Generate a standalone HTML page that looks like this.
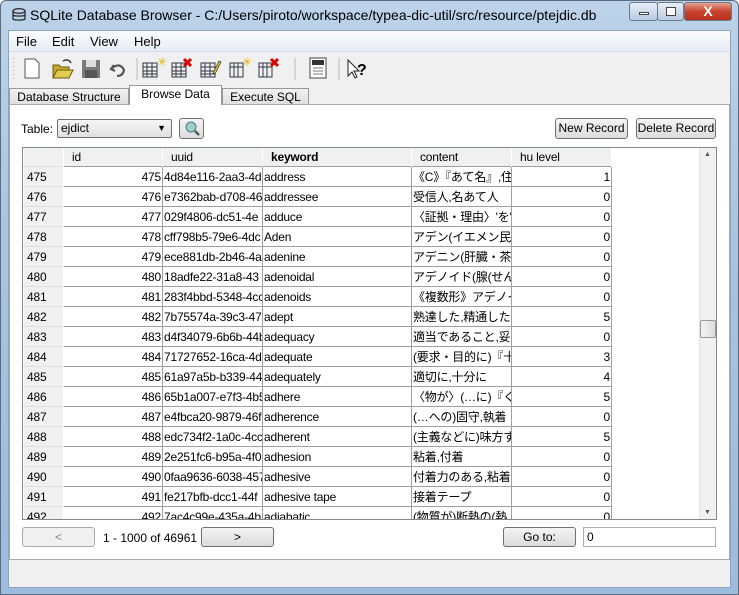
<!DOCTYPE html>
<html><head><meta charset="utf-8"><style>
*{margin:0;padding:0;box-sizing:border-box}
body{width:739px;height:595px;overflow:hidden;background:#fff;font-family:"Liberation Sans","Noto Sans CJK JP",sans-serif;font-size:12px;color:#000;position:relative}
.abs{position:absolute}
#frame{left:0;top:0;width:739px;height:595px;background:linear-gradient(#bcd3ea,#a9c4e2 40%,#9dbbdd);border-radius:6px 6px 0 0;border:1px solid #5b6b80}
#title{left:30px;top:7px;font-size:14px;color:#000}
#client{left:8px;top:30px;width:723px;height:558px;background:#f0f0f0;border:1px solid #8ea3bd}
#menu{left:9px;top:31px;width:721px;height:21px;background:linear-gradient(#fbfcfe,#e6ecf5);border-bottom:1px solid #d8dde6}
#menu span{position:absolute;top:3px;font-size:13px}
.btnw{border:1px solid #6d7a8c;border-radius:3px;height:19px;top:2px}
#tabs div{position:absolute;height:18px;border:1px solid #999;border-bottom:none;background:linear-gradient(#f2f2f2,#dcdcdc);font-size:12px;text-align:center;line-height:17px}
#panel{left:9px;top:104px;width:721px;height:456px;background:#fff;border:1px solid #aaa}
.btn{border:1px solid #707070;border-radius:3px;background:linear-gradient(#f4f4f4,#dcdcdc);text-align:center;font-size:12px;line-height:18px}
#grid{left:22px;top:147px;width:695px;height:373px;border:1px solid #828790;overflow:hidden;background:#fff}
table{border-collapse:collapse;table-layout:fixed;position:absolute;left:0;top:0;width:588px}
td{height:20px;border:1px solid #a0a0a0;white-space:nowrap;overflow:hidden;padding:0 1px;font-size:12px;line-height:18px;letter-spacing:-0.2px}
td.n{background:#f0f0f0;border-color:#e0e0e0 #fff;padding-left:3px}
td.r{text-align:right}
tr.h td{height:18px;background:#f0f0f0;border:none;border-right:1px solid #fff;padding-left:8px}
#vs{left:699px;top:148px;width:17px;height:371px;background:#f0f0f0;border-left:1px solid #e4e4e4}
</style></head><body>
<div id="frame" class="abs"></div>
<svg class="abs" style="left:11px;top:8px" width="16" height="14"><ellipse cx="8" cy="3" rx="6" ry="2.3" fill="none" stroke="#333" stroke-width="1.4"/><path d="M2 3v8c0 1.4 12 1.4 12 0V3M2 7c0 1.4 12 1.4 12 0" fill="none" stroke="#333" stroke-width="1.4"/></svg>
<div id="title" class="abs">SQLite Database Browser - C:/Users/piroto/workspace/typea-dic-util/src/resource/ptejdic.db</div>
<div class="abs btnw" style="left:629px;width:29px;background:linear-gradient(#e8eef6,#b9cbe2)"><div style="position:absolute;left:9px;top:9px;width:10px;height:3px;border:1px solid #444;background:#fff"></div></div>
<div class="abs btnw" style="left:657px;width:27px;background:linear-gradient(#e8eef6,#b9cbe2)"><div style="position:absolute;left:8px;top:4px;width:10px;height:9px;border:1px solid #444;background:#fff"></div></div>
<div class="abs btnw" style="left:684px;width:48px;background:linear-gradient(#e8a090,#c7422c 50%,#b8301c);color:#fff;font-weight:bold;text-align:center;font-size:14px;line-height:17px">X</div>
<div id="client" class="abs"></div>
<div id="menu" class="abs"><span style="left:7px">File</span><span style="left:43px">Edit</span><span style="left:81px">View</span><span style="left:125px">Help</span></div>
<div class="abs" style="left:9px;top:53px;width:721px;height:33px;background:#f0f0f0"></div>
<svg class="abs" style="left:10px;top:55px" width="370" height="28">
<g fill="#aaa"><rect x="3" y="3" width="1" height="1"/><rect x="3" y="7" width="1" height="1"/><rect x="3" y="11" width="1" height="1"/><rect x="3" y="15" width="1" height="1"/><rect x="3" y="19" width="1" height="1"/><rect x="3" y="23" width="1" height="1"/></g>
<path d="M15 4h10l4 4v15H15z" fill="#fff" stroke="#555"/>
<path d="M43 10h6l2 2h8v11H43z" fill="#c8a830" stroke="#6b5a10"/><path d="M43 23l4-8h16l-4 8z" fill="#e0cc50" stroke="#6b5a10"/><path d="M53 6q5-3 8 2" fill="none" stroke="#333" stroke-width="1.5"/>
<rect x="72" y="5" width="18" height="18" rx="1" fill="#7a7a7a"/><rect x="76" y="5" width="10" height="7" fill="#ddd"/><rect x="75" y="15" width="12" height="8" fill="#555"/>
<path d="M104 10l-3 4 4 2M102 13q8-6 12 2q-1 6-7 6" fill="none" stroke="#555" stroke-width="2.2"/>
<line x1="127" y1="3" x2="127" y2="25" stroke="#bbb"/>
<g fill="none" stroke="#334"><rect x="133" y="8" width="14" height="14"/><path d="M133 12h14M133 16h14M133 19h14M137 8v14M142 8v14"/></g><text x="147" y="11" fill="#e8b000" font-size="12">✳</text>
<g fill="none" stroke="#334"><rect x="162" y="8" width="14" height="14"/><path d="M162 12h14M162 16h14M162 19h14M166 8v14M171 8v14"/></g><path d="M174 4l7 7M181 4l-7 7" stroke="#d00" stroke-width="3"/>
<g fill="none" stroke="#334"><rect x="191" y="8" width="14" height="14"/><path d="M191 12h14M191 16h14M191 19h14M195 8v14M200 8v14"/></g><path d="M203 18l6-12 2 1-6 12z" fill="#e8c020" stroke="#333" stroke-width=".7"/>
<g fill="none" stroke="#334"><rect x="220" y="8" width="13" height="14"/><path d="M220 12h13M224 8v14M228 8v14"/></g><text x="232" y="11" fill="#e8b000" font-size="12">✳</text>
<g fill="none" stroke="#334"><rect x="249" y="8" width="13" height="14"/><path d="M249 12h13M253 8v14M257 8v14"/></g><path d="M261 4l7 7M268 4l-7 7" stroke="#d00" stroke-width="3"/>
<line x1="285" y1="3" x2="285" y2="25" stroke="#bbb"/>
<rect x="300" y="3" width="16" height="20" fill="#fff" stroke="#444"/><rect x="302" y="5" width="12" height="5" fill="#333"/><path d="M303 13h10M303 16h10M303 19h10" stroke="#777"/>
<line x1="329" y1="3" x2="329" y2="25" stroke="#bbb"/>
<path d="M338 5v16l4-4 3 6 2-1-3-6h5z" fill="#fff" stroke="#222"/><text x="347" y="20" font-size="16" font-weight="bold" font-family="Liberation Sans">?</text>
</svg>
<div id="tabs">
<div style="left:9px;top:88px;width:120px">Database Structure</div>
<div style="left:129px;top:85px;width:93px;height:20px;background:#fff;z-index:2">Browse Data</div>
<div style="left:222px;top:88px;width:87px">Execute SQL</div>
</div>
<div id="panel" class="abs"></div>
<div class="abs" style="left:21px;top:122px">Table:</div>
<div class="abs" style="left:57px;top:119px;width:115px;height:19px;border:1px solid #707070;border-radius:2px;background:linear-gradient(#f6f6f6,#e0e0e0);padding-left:3px;line-height:17px">ejdict<span style="position:absolute;right:5px;top:0;font-size:9px">▼</span></div>
<div class="abs btn" style="left:179px;top:118px;width:25px;height:21px"><svg width="22" height="19"><circle cx="10" cy="8" r="5" fill="#9cd0c8" stroke="#4a7a8a"/><path d="M14 12l4 4" stroke="#555" stroke-width="2.5"/></svg></div>
<div class="abs btn" style="left:555px;top:118px;width:73px;height:21px">New Record</div>
<div class="abs btn" style="left:636px;top:118px;width:80px;height:21px">Delete Record</div>
<div id="grid" class="abs">
<table>
<colgroup><col style="width:40px"><col style="width:99px"><col style="width:100px"><col style="width:149px"><col style="width:100px"><col style="width:100px"></colgroup>
<tr class="h"><td></td><td>id</td><td>uuid</td><td><b>keyword</b></td><td>content</td><td>hu level</td></tr>
<tr><td class="n">475</td><td class="r">475</td><td>4d84e116-2aa3-4d</td><td>address</td><td>《C》『あて名』,住所</td><td class="r">1</td></tr>
<tr><td class="n">476</td><td class="r">476</td><td>e7362bab-d708-46</td><td>addressee</td><td>受信人,名あて人</td><td class="r">0</td></tr>
<tr><td class="n">477</td><td class="r">477</td><td>029f4806-dc51-4e</td><td>adduce</td><td>〈証拠・理由〉'を'あげる</td><td class="r">0</td></tr>
<tr><td class="n">478</td><td class="r">478</td><td>cff798b5-79e6-4dc</td><td>Aden</td><td>アデン(イエメン民主</td><td class="r">0</td></tr>
<tr><td class="n">479</td><td class="r">479</td><td>ece881db-2b46-4a</td><td>adenine</td><td>アデニン(肝臓・茶の</td><td class="r">0</td></tr>
<tr><td class="n">480</td><td class="r">480</td><td>18adfe22-31a8-43</td><td>adenoidal</td><td>アデノイド(腺(せん)</td><td class="r">0</td></tr>
<tr><td class="n">481</td><td class="r">481</td><td>283f4bbd-5348-4cc</td><td>adenoids</td><td>《複数形》アデノイド</td><td class="r">0</td></tr>
<tr><td class="n">482</td><td class="r">482</td><td>7b75574a-39c3-47</td><td>adept</td><td>熟達した,精通した(</td><td class="r">5</td></tr>
<tr><td class="n">483</td><td class="r">483</td><td>d4f34079-6b6b-44b</td><td>adequacy</td><td>適当であること,妥当</td><td class="r">0</td></tr>
<tr><td class="n">484</td><td class="r">484</td><td>71727652-16ca-4d</td><td>adequate</td><td>(要求・目的に)『十分</td><td class="r">3</td></tr>
<tr><td class="n">485</td><td class="r">485</td><td>61a97a5b-b339-44</td><td>adequately</td><td>適切に,十分に</td><td class="r">4</td></tr>
<tr><td class="n">486</td><td class="r">486</td><td>65b1a007-e7f3-4b5</td><td>adhere</td><td>〈物が〉(…に)『くっつ</td><td class="r">5</td></tr>
<tr><td class="n">487</td><td class="r">487</td><td>e4fbca20-9879-46f</td><td>adherence</td><td>(…への)固守,執着</td><td class="r">0</td></tr>
<tr><td class="n">488</td><td class="r">488</td><td>edc734f2-1a0c-4cc</td><td>adherent</td><td>(主義などに)味方す</td><td class="r">5</td></tr>
<tr><td class="n">489</td><td class="r">489</td><td>2e251fc6-b95a-4f0</td><td>adhesion</td><td>粘着,付着</td><td class="r">0</td></tr>
<tr><td class="n">490</td><td class="r">490</td><td>0faa9636-6038-457</td><td>adhesive</td><td>付着力のある,粘着</td><td class="r">0</td></tr>
<tr><td class="n">491</td><td class="r">491</td><td>fe217bfb-dcc1-44f</td><td>adhesive tape</td><td>接着テープ</td><td class="r">0</td></tr>
<tr><td class="n">492</td><td class="r">492</td><td>7ac4c99e-435a-4b</td><td>adiabatic</td><td>(物質が)断熱の(熱</td><td class="r">0</td></tr>
</table>
</div>
<div id="vs" class="abs"><div style="position:absolute;left:4px;top:3px;font-size:7px;color:#555">▲</div><div style="position:absolute;left:0;top:172px;width:16px;height:18px;border:1px solid #999;border-radius:2px;background:linear-gradient(90deg,#f4f4f4,#dcdcdc)"></div><div style="position:absolute;left:4px;bottom:3px;font-size:7px;color:#555">▼</div></div>
<div class="abs btn" style="left:22px;top:527px;width:73px;height:20px;color:#888;background:#f0f0f0;border-color:#aaa">&lt;</div>
<div class="abs" style="left:103px;top:531px">1 - 1000 of 46961</div>
<div class="abs btn" style="left:201px;top:527px;width:73px;height:20px">&gt;</div>
<div class="abs btn" style="left:503px;top:527px;width:73px;height:20px">Go to:</div>
<div class="abs" style="left:583px;top:527px;width:133px;height:20px;border:1px solid #abadb3;background:#fff;padding-left:3px;line-height:18px">0</div>
</body></html>
